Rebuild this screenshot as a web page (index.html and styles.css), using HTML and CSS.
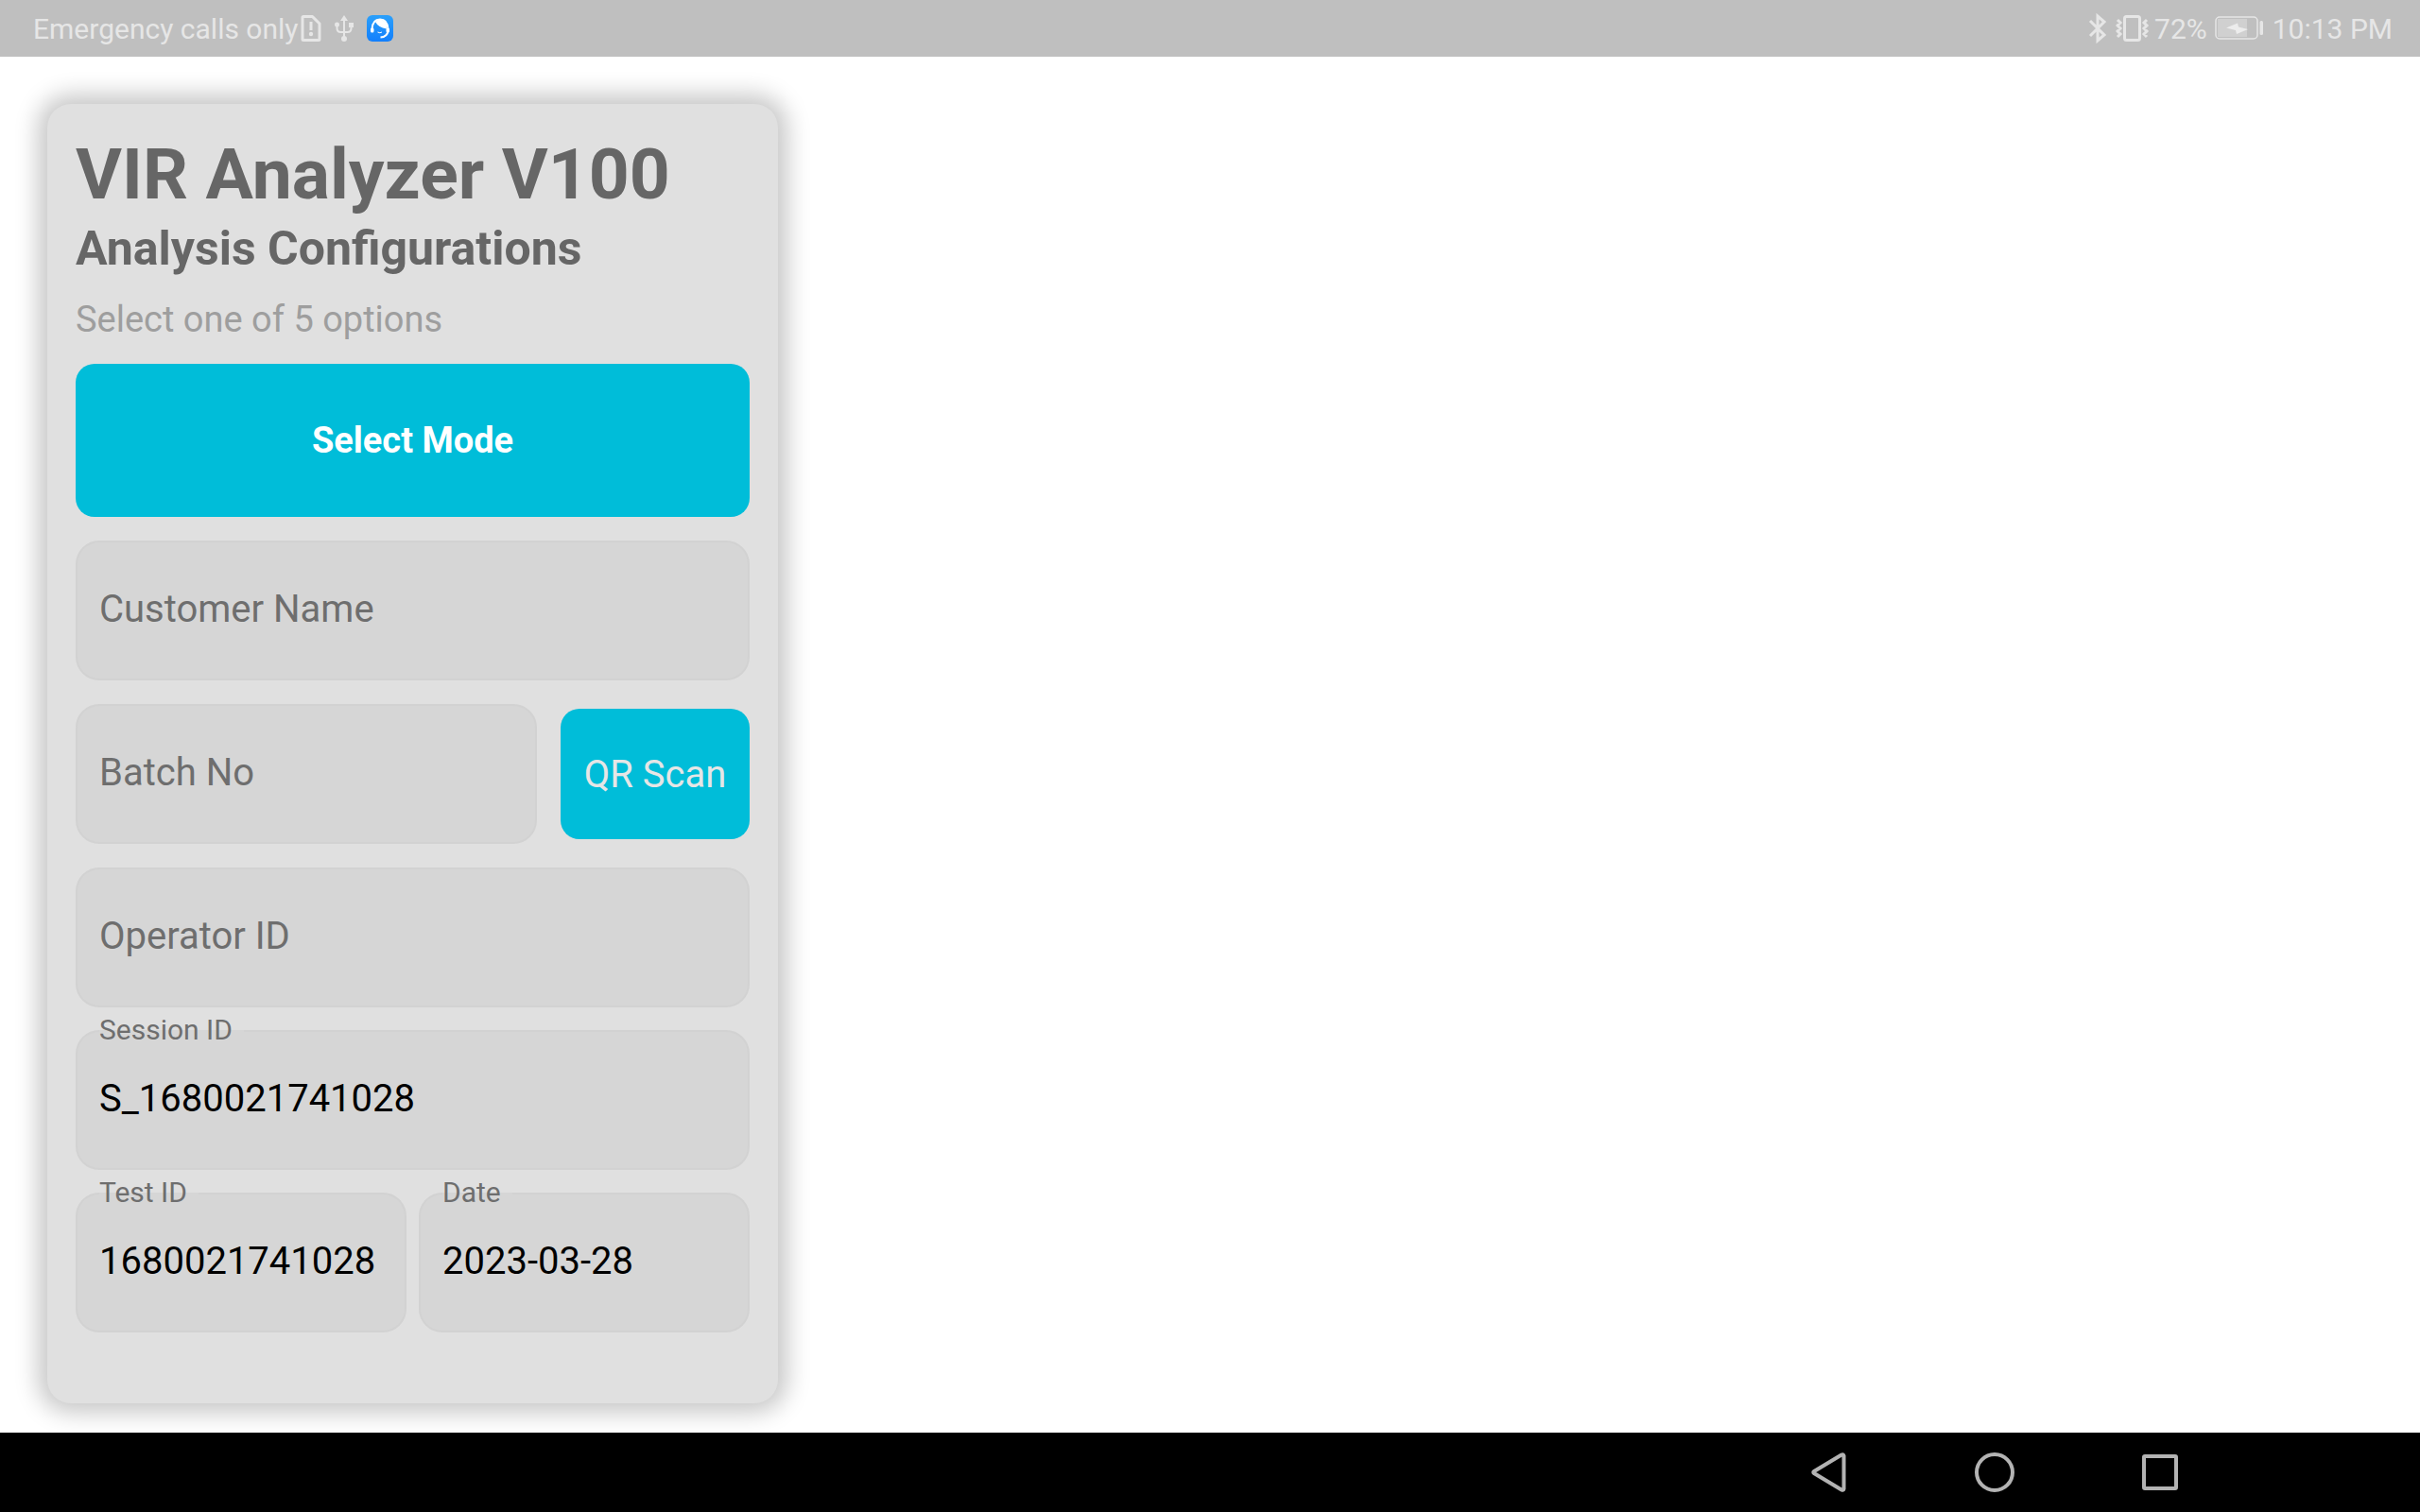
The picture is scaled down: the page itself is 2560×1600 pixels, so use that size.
FILE: index.html
```html
<!DOCTYPE html>
<html lang="en">
<head>
<meta charset="utf-8">
<title>VIR Analyzer V100</title>
<link rel="stylesheet" href="styles.css">
</head>
<body>
<header class="status">
  <div class="status-side">
    <span>Emergency calls only</span>
    <svg class="ico-sim" width="28" height="32" viewBox="0 0 28 32" fill="none" stroke="currentColor" stroke-width="3"><path d="M5 3.500h9.500L22 11v16.500q0 1-1 1H5q-1 0-1-1v-23q0-1 1-1z" stroke-linejoin="round"/><path d="M13 9v9"/><circle cx="13" cy="22" r="2.200" fill="currentColor" stroke="none"/></svg>
    <svg class="ico-usb" width="22" height="30" viewBox="0 0 22 30" fill="none" stroke="currentColor" stroke-width="2"><path d="M11 26V5M3.500 11v4q0 4 4 4h7q4 0 4-4v-4"/><path d="M11 1l4 6H7z" fill="currentColor" stroke="none"/><circle cx="3.500" cy="11" r="2.500" fill="currentColor" stroke="none"/><circle cx="11" cy="26" r="3" fill="currentColor" stroke="none"/><path d="M16 9h5v5h-5z" fill="currentColor" stroke="none"/></svg>
    <svg class="ico-app" width="28" height="28" viewBox="0 0 28 28"><defs><linearGradient id="blue" x2="0" y2="1"><stop stop-color="#2ba0fb"/><stop offset="1" stop-color="#127ffc"/></linearGradient></defs><rect width="28" height="28" rx="6" fill="url(#blue)"/><path d="M5.500 15Q6 4.500 14 4.500T22.500 15M22.500 17q-1 6-8 6.500" fill="none" stroke="#fff" stroke-width="2"/><path d="M9 7q3 6 12 7.500V10q-2-5-8-5.500z" fill="#fff"/><rect x="4" y="13.500" width="3.500" height="5" rx="1.500" fill="#fff"/><rect x="20.500" y="13.500" width="3.500" height="5" rx="1.500" fill="#fff"/><path d="M11.500 18q2.500 1.500 4.500 0" fill="none" stroke="#fff"/></svg>
  </div>
  <div class="status-side">
    <svg width="22" height="32" viewBox="0 0 22 32" fill="none" stroke="currentColor" stroke-width="3"><path d="M3 8l15 15-7 6V3l7 6L3 24"/></svg>
    <svg class="ico-vib" width="36" height="30" viewBox="0 0 36 30" fill="none" stroke="currentColor"><rect x="9.500" y="2.500" width="16" height="25" rx="2" stroke-width="3"/><path d="M2 6l3 3-3 3 3 3-3 3 3 3-3 3M33 6l-3 3 3 3-3 3 3 3-3 3 3 3" stroke-width="3"/></svg>
    <span>72%</span>
    <svg class="ico-bat" width="52" height="26" viewBox="0 0 52 26"><rect x="1" y="1" width="44" height="23" rx="4" fill="none" stroke="currentColor" stroke-width="1.500"/><path d="M3 3h31v19H3z" fill="#d0d0d0"/><rect x="47.500" y="5" width="3.500" height="15" rx="1.500" fill="currentColor"/><path d="M12 12.500l12-5 1 4 10 2.500-12 5-1-4z" fill="#ececec"/></svg>
    <span>10:13 PM</span>
  </div>
</header>

<main class="screen">
  <form class="card">
    <h1 class="title">VIR Analyzer V100</h1>
    <h2 class="subtitle">Analysis Configurations</h2>
    <p class="hint">Select one of 5 options</p>
    <button class="btn btn-mode" type="button">Select Mode</button>
    <div class="fields">
      <input class="input" type="text" placeholder="Customer Name" aria-label="Customer Name">
      <div class="row row-scan">
        <input class="input" type="text" placeholder="Batch No" aria-label="Batch No">
        <button class="btn btn-scan" type="button">QR Scan</button>
      </div>
      <input class="input" type="text" placeholder="Operator ID" aria-label="Operator ID">
    </div>
    <div class="fields fields-filled">
      <div class="field">
        <label class="label" for="session">Session ID</label>
        <input class="input" id="session" type="text" value="S_1680021741028">
      </div>
      <div class="row row-half">
        <div class="field">
          <label class="label" for="test">Test ID</label>
          <input class="input" id="test" type="text" value="1680021741028">
        </div>
        <div class="field">
          <label class="label" for="date">Date</label>
          <input class="input" id="date" type="text" value="2023-03-28">
        </div>
      </div>
    </div>
  </form>
</main>

<nav class="navbar">
  <button class="nav-btn" type="button" aria-label="Back"><svg width="84" height="84" viewBox="0 0 84 84"><path d="M55 23.500q2-1 2.500 1v35q-.500 2-2.500 1L26 43q-1.500-1 0-2z"/></svg></button>
  <button class="nav-btn" type="button" aria-label="Home"><svg width="84" height="84" viewBox="0 0 84 84"><circle cx="42" cy="42" r="19"/></svg></button>
  <button class="nav-btn" type="button" aria-label="Recent apps"><svg width="84" height="84" viewBox="0 0 84 84"><rect x="25" y="25" width="34" height="34" rx="1"/></svg></button>
</nav>
</body>
</html>
```
FILE: styles.css
```css
* { box-sizing: border-box; }

body {
  margin: 0;
  min-height: 100vh;
  display: flex;
  flex-direction: column;
  background: #fff;
  font-family: Roboto, "Liberation Sans", sans-serif;
}

.status {
  height: 60px;
  padding: 0 29px 0 35px;
  display: flex;
  justify-content: space-between;
  background: #bfbfbf;
  color: #e6e6e6;
  font-size: 30px;
  line-height: 60px;
}
.status-side { display: flex; align-items: center; }
.status-side span { padding-top: 2px; }
.ico-usb { margin: 0 13px 0 9px; }
.ico-vib { margin: 0 5px 0 8px; }
.ico-bat { margin: 0 9px 0 8px; }

.screen {
  flex: 1;
  padding: 50px 50px 31px;
  display: flex;
}

.card {
  width: 773px;
  padding: 30px 30px 75px;
  border-radius: 25px;
  background: #e0e0e0;
  box-shadow: 0 0 24px 10px rgba(0, 0, 0, 0.22);
}

.title, .subtitle, .hint { margin: 0; }
.title { color: #666; font-size: 75px; line-height: 88px; }
.subtitle { color: #666; font-size: 50px; line-height: 70px; }
.hint { padding-top: 10px; color: #9e9e9e; font-size: 38px; line-height: 60px; }

.btn {
  padding: 0;
  border: 0;
  border-radius: 20px;
  background: #00bdd9;
  font-family: inherit;
  font-size: 40px;
}
.btn-mode {
  width: 100%;
  height: 162px;
  margin: 17px 0 25px;
  display: block;
  color: #fff;
  font-size: 38px;
  font-weight: 700;
}
.btn-scan { height: 138px; color: #e6e6e6; }

.fields { display: grid; gap: 25px; }
.fields-filled { margin-top: 24px; gap: 24px; }

.row { display: grid; align-items: center; }
.row-scan { grid-template-columns: 1fr 200px; gap: 25px; }
.row-half { grid-template-columns: 1fr 1fr; gap: 13px; }

.field { position: relative; }

.input {
  width: 100%;
  min-width: 0;
  height: 148px;
  padding: 0 23px 3px;
  display: block;
  border: 2px solid #d2d2d2;
  border-radius: 25px;
  background: #d6d6d6;
  color: #000;
  font-family: inherit;
  font-size: 40px;
}
.input::placeholder { color: #6e6e6e; opacity: 1; }

/* Floating label that sits across the field's top edge and hides the border behind it */
.label {
  position: absolute;
  top: -18px;
  left: 25px;
  padding-right: 12px;
  background: linear-gradient(#d6d6d6, #d6d6d6) 0 18px / 100% 2px no-repeat;
  color: #6e6e6e;
  font-size: 30px;
  line-height: 36px;
}

.navbar {
  height: 84px;
  padding-right: 233px;
  display: flex;
  justify-content: flex-end;
  gap: 91px;
  background: #000;
}
.nav-btn { padding: 0; border: 0; background: none; }
.nav-btn svg {
  display: block;
  fill: none;
  stroke: #b3b3b3;
  stroke-width: 4;
}
```
